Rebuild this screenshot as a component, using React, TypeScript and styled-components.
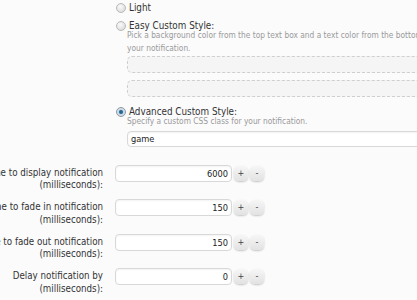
import React from "react";
import styled, { createGlobalStyle } from "styled-components";

const GlobalStyle = createGlobalStyle`
  html, body {
    margin: 0;
    padding: 0;
    overflow: hidden;
    background: #fbfbfc;
  }
  body {
    font-family: "DejaVu Sans Condensed", "DejaVu Sans", Tahoma, sans-serif;
    font-size: 9.7px;
    color: #333;
  }
`;

const Form = styled.div`
  width: 640px;
  margin-left: -117px;
  padding-top: 1px;
  display: flex;
  flex-direction: column;
`;

const Row = styled.div<{ $gap?: number }>`
  display: grid;
  grid-template-columns: 220px 1fr;
  column-gap: 12px;
  margin-bottom: ${(p) => p.$gap ?? 7.5}px;
`;

const Label = styled.div`
  text-align: right;
  line-height: 12.5px;
  padding-top: 2px;
  color: #333;
  white-space: nowrap;
`;

const Field = styled.div`
  display: flex;
  flex-direction: column;
  align-items: flex-start;
`;

const Choice = styled.label<{ $top?: number }>`
  display: flex;
  align-items: center;
  gap: 3px;
  margin-top: ${(p) => p.$top ?? 0}px;
  padding-left: 1px;
  line-height: 13px;
  font-size: 9.8px;
  color: #333;
`;

const Radio = styled.input.attrs({ type: "radio" })`
  appearance: none;
  margin: 0;
  width: 10px;
  height: 10px;
  border-radius: 50%;
  border: 1px solid #b9b9b9;
  background: radial-gradient(circle at 40% 35%, #fafafa 0%, #dcdcdc 80%);
  box-sizing: border-box;
  &:checked {
    border-color: #8a9aa8;
    background: radial-gradient(
      circle,
      #1c5c8c 0%,
      #2f79ae 32%,
      #cfd6dc 42%,
      #e6e6e6 100%
    );
  }
`;

const Indent = styled.div`
  padding-left: 12px;
  width: 390px;
  display: flex;
  flex-direction: column;
`;

const Hint = styled.div<{ $top?: number; $bottom?: number }>`
  font-size: 8.3px;
  line-height: 12.5px;
  color: #9a9a9a;
  white-space: nowrap;
  margin-top: ${(p) => p.$top ?? -3}px;
  margin-bottom: ${(p) => p.$bottom ?? 2}px;
`;

const ColorBox = styled.div`
  box-sizing: border-box;
  height: 17px;
  margin-bottom: 7px;
  border: 1px dashed #cfcfcf;
  border-radius: 5px;
  background: #f5f5f5;
`;

const TextBox = styled.input`
  box-sizing: border-box;
  display: block;
  height: 16px;
  width: 100%;
  margin: 0;
  padding: 0 3px;
  border: 1px solid #d8d8d8;
  border-radius: 4px;
  background: #fff;
  box-shadow: inset 0 1px 2px rgba(0, 0, 0, 0.05);
  font: inherit;
  font-size: 9.2px;
  color: #222;
  outline: none;
`;

const Spinner = styled.div`
  display: flex;
  align-items: center;
  gap: 2px;
`;

const NumberBox = styled(TextBox)`
  width: 117px;
  height: 17px;
  text-align: right;
`;

const StepButton = styled.button`
  width: 14px;
  height: 15px;
  padding: 0;
  border: none;
  border-radius: 5px;
  background: linear-gradient(#f6f6f6, #e2e2e2);
  box-shadow: 0 1px 2px rgba(0, 0, 0, 0.22);
  font: inherit;
  font-size: 9px;
  line-height: 15px;
  color: #444;
`;

const rows = [
  { label: "Time to display notification", value: 6000 },
  { label: "Time to fade in notification", value: 150 },
  { label: "Time to fade out notification", value: 150 },
  { label: "Delay notification by", value: 0 },
];

export default function App() {
  return (
    <>
      <GlobalStyle />
      <Form>
        <Row $gap={18}>
          <Label />
          <Field>
            <Choice>
              <Radio name="style" />
              Light
            </Choice>
            <Choice $top={5}>
              <Radio name="style" />
              Easy Custom Style:
            </Choice>
            <Indent>
              <Hint>
                Pick a background color from the top text box and a text color
                from the bottom text box to style
                <br />
                your notification.
              </Hint>
              <ColorBox />
              <ColorBox />
            </Indent>
            <Choice $top={1}>
              <Radio name="style" defaultChecked />
              Advanced Custom Style:
            </Choice>
            <Indent>
              <Hint $bottom={3}>
                Specify a custom CSS class for your notification.
              </Hint>
              <TextBox defaultValue="game" />
            </Indent>
          </Field>
        </Row>
        {rows.map((r) => (
          <Row key={r.label}>
            <Label>
              {r.label}
              <br />
              (milliseconds):
            </Label>
            <Field>
              <Spinner>
                <NumberBox defaultValue={r.value} />
                <StepButton>+</StepButton>
                <StepButton>-</StepButton>
              </Spinner>
            </Field>
          </Row>
        ))}
      </Form>
    </>
  );
}
